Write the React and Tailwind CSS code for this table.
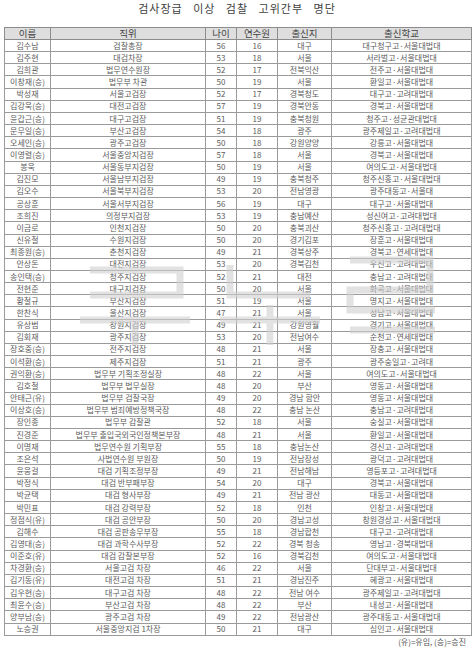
import React from 'react'

const rows = [
  ['김수남', '검찰총장', 56, 16, '대구', '대구청구고·서울대법대'],
  ['김주현', '대검차장', 53, 18, '서울', '서라벌고·서울대법대'],
  ['김희관', '법무연수원장', 52, 17, '전북익산', '전주고·서울대법대'],
  ['이창재(승)', '법무부 차관', 50, 19, '서울', '환일고·서울대법대'],
  ['박성재', '서울고검장', 52, 17, '경북청도', '대구고·고려대법대'],
  ['김강욱(승)', '대전고검장', 57, 19, '경북안동', '경북고·서울대법대'],
  ['윤갑근(승)', '대구고검장', 51, 19, '충북청원', '청주고·성균관대법대'],
  ['문무일(승)', '부산고검장', 54, 18, '광주', '광주제일고·고려대법대'],
  ['오세인(승)', '광주고검장', 50, 18, '강원양양', '강릉고·서울대법대'],
  ['이영렬(승)', '서울중앙지검장', 57, 18, '서울', '경북고·서울대법대'],
  ['봉욱', '서울동부지검장', 50, 19, '서울', '여의도고·서울대법대'],
  ['김진모', '서울남부지검장', 49, 19, '충북청주', '청주신흥고·서울대법대'],
  ['김오수', '서울북부지검장', 53, 20, '전남영광', '광주대동고·서울대'],
  ['공상훈', '서울서부지검장', 56, 19, '대구', '대구고·서울대법대'],
  ['조희진', '의정부지검장', 53, 19, '충남예산', '성신여고·고려대법대'],
  ['이금로', '인천지검장', 50, 20, '충북괴산', '청주신흥고·고려대법대'],
  ['신유철', '수원지검장', 50, 20, '경기김포', '장훈고·서울대법대'],
  ['최종원(승)', '춘천지검장', 49, 21, '경북상주', '경북고·연세대법대'],
  ['안상돈', '대전지검장', 53, 20, '경북김천', '우신고·고려대법대'],
  ['송인택(승)', '청주지검장', 52, 21, '대전', '충남고·고려대법대'],
  ['전현준', '대구지검장', 50, 20, '서울', '화곡고·서울대법대'],
  ['황철규', '부산지검장', 51, 19, '서울', '명지고·서울대법대'],
  ['한찬식', '울산지검장', 47, 21, '서울', '성남고·서울대법대'],
  ['유상범', '창원지검장', 49, 21, '강원영월', '경기고·서울대법대'],
  ['김회재', '광주지검장', 53, 20, '전남여수', '순천고·연세대법대'],
  ['장호중(승)', '전주지검장', 48, 21, '서울', '장충고·서울대법대'],
  ['이석환(승)', '제주지검장', 51, 21, '광주', '광주숭일고·고려대'],
  ['권익환(승)', '법무부 기획조정실장', 48, 22, '서울', '여의도고·서울대법대'],
  ['김호철', '법무부 법무실장', 48, 20, '부산', '영동고·서울대법대'],
  ['안태근(유)', '법무부 검찰국장', 49, 20, '경남 함안', '영동고·서울대법대'],
  ['이상호(승)', '법무부 범죄예방정책국장', 48, 22, '충남 논산', '충남고·고려대법대'],
  ['장인종', '법무부 감찰관', 52, 18, '서울', '숭실고·서울대법대'],
  ['진경준', '법무부 출입국외국인정책본부장', 48, 21, '서울', '환일고·서울대법대'],
  ['이명재', '법무연수원 기획부장', 55, 18, '충남논산', '경신고·고려대법대'],
  ['조은석', '사법연수원 부원장', 50, 19, '전남장성', '광덕고·고려대법대'],
  ['윤웅걸', '대검 기획조정부장', 49, 21, '전남해남', '영등포고·고려대법대'],
  ['박정식', '대검 반부패부장', 54, 20, '대구', '경북고·서울대법대'],
  ['박균택', '대검 형사부장', 49, 21, '전남 광산', '대동고·서울대법대'],
  ['박민표', '대검 강력부장', 52, 18, '인천', '인창고·서울대법대'],
  ['정점식(유)', '대검 공안부장', 50, 20, '경남고성', '창원경상고·서울대법대'],
  ['김해수', '대검 공판송무부장', 55, 18, '경남합천', '대구고·고려대법대'],
  ['김영대(승)', '대검 과학수사부장', 52, 22, '경북 청송', '영남고·경북대법대'],
  ['이준호(유)', '대검 감찰본부장', 52, 16, '경북김천', '여의도고·서울대법대'],
  ['차경환(승)', '서울고검 차장', 46, 22, '서울', '단대부고·서울대법대'],
  ['김기동(유)', '대전고검 차장', 51, 21, '경남진주', '혜광고·서울대법대'],
  ['김우현(승)', '대구고검 차장', 48, 22, '전남 여수', '광주제일고·고려대법대'],
  ['최윤수(승)', '부산고검 차장', 48, 22, '부산', '내성고·서울대법대'],
  ['양부남(승)', '광주고검 차장', 49, 22, '전남광산', '광주대동고·서울대법대'],
  ['노승권', '서울중앙지검 1차장', 50, 21, '대구', '심인고·서울대법대'],
]

const head = ['이름', '직위', '나이', '연수원', '출신지', '출신학교']
const widths = ['w-[46px]', 'w-[155px]', 'w-[31px]', 'w-[41px]', 'w-[54px]', 'w-[140px]']

const App = () => {
  return (
    <div
      className="relative w-[474px] h-[648px] bg-white text-[#5c5c5c] overflow-hidden"
      style={{ fontFamily: '"Noto Sans CJK KR", "Noto Sans", sans-serif' }}
    >
      <h1 className="h-[27px] pt-[1px] text-center text-[11px] leading-[14px] tracking-[1px] [word-spacing:7px] text-[#404040]">
        검사장급 이상 검찰 고위간부 명단
      </h1>

      <table className="ml-[4px] w-[467px] table-fixed border-collapse text-[8px] leading-none">
        <colgroup>
          {widths.map((w, i) => <col key={i} className={w} />)}
        </colgroup>
        <thead>
          <tr className="h-[12px] bg-[#dedede]">
            {head.map((h) => (
              <th key={h} className="border border-[#8c8c8c] font-normal text-[9.5px] text-[#444] p-0 text-center">{h}</th>
            ))}
          </tr>
        </thead>
        <tbody>
          {rows.map((r, i) => (
            <tr key={i} className="h-[12.16px]">
              {r.map((c, j) => (
                <td key={j} className="border border-[#9a9a9a] p-0 text-center whitespace-nowrap overflow-hidden">{c}</td>
              ))}
            </tr>
          ))}
        </tbody>
      </table>

      <p className="pr-[8px] pt-[1px] text-right text-[8px] leading-[10px] text-[#555]">
        (유)=유임, (승)=승진
      </p>

      <svg className="absolute left-[60px] top-[250px] pointer-events-none" width="400" height="100" viewBox="0 0 400 100">
        <g fill="none" stroke="#d0d0d0" strokeWidth="7" opacity="0.6">
          <path d="M30 20 H120 V45 H30" />
          <path d="M20 70 H130" />
          <path d="M75 70 V95" />
          <path d="M170 15 V45 H250" />
          <path d="M160 70 H260" />
          <path d="M210 55 V95" />
          <path d="M290 10 H370 V40 H290 V60 H375" />
          <path d="M290 80 H375" />
        </g>
      </svg>
    </div>
  )
}

export default App
